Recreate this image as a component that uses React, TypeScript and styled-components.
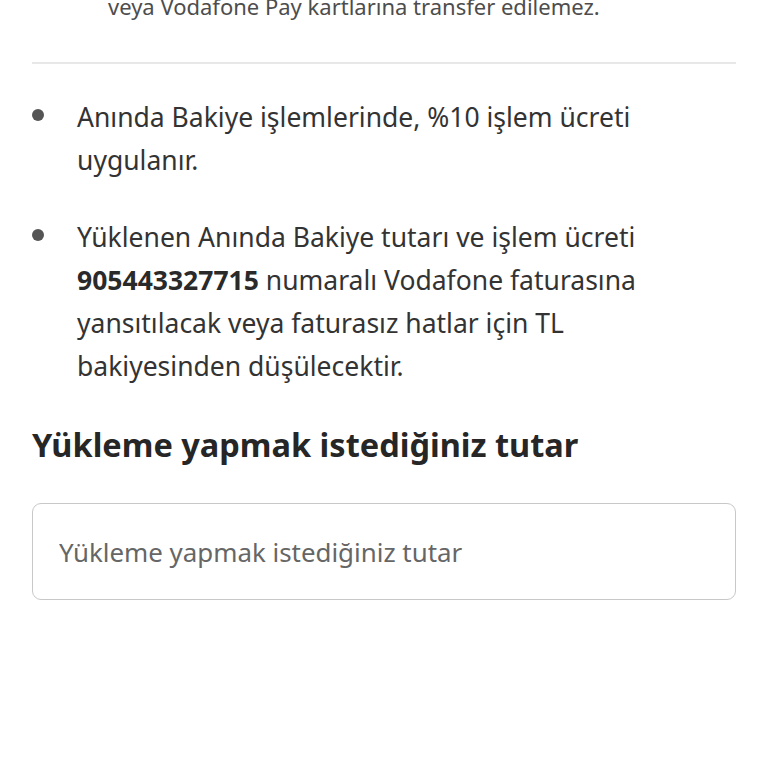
import React from 'react';
import styled, { createGlobalStyle } from 'styled-components';

const GlobalStyle = createGlobalStyle`
  html, body {
    margin: 0;
    padding: 0;
    background: #ffffff;
  }
  body {
    font-family: "Noto Sans", "Open Sans", sans-serif;
    color: #333333;
    overflow: hidden;
  }
`;

const Page = styled.div`
  width: 768px;
  height: 768px;
  padding: 0 32px;
  box-sizing: border-box;
  overflow: hidden;
  background: #ffffff;
`;

const CutNote = styled.p`
  margin: -10px 0 0 76px;
  font-size: 22px;
  line-height: 32px;
  color: #4d4d4d;
`;

const Divider = styled.hr`
  margin: 40px 0 0;
  border: none;
  height: 2px;
  background: #e8e8e8;
`;

const BulletList = styled.ul`
  list-style: none;
  margin: 0;
  padding: 32px 0 0;
  display: flex;
  flex-direction: column;
  gap: 34px;
`;

const BulletItem = styled.li`
  position: relative;
  padding: 0 40px 0 45px;
  font-size: 26.5px;
  line-height: 43px;
  color: #333333;

  &::before {
    content: '';
    position: absolute;
    left: 0;
    top: 13px;
    width: 12px;
    height: 12px;
    border-radius: 50%;
    background: #555555;
  }
`;

const Strong = styled.b`
  font-weight: 700;
  color: #2a2a2a;
`;

const SectionTitle = styled.h2`
  margin: 37px 0 0;
  font-size: 32.5px;
  line-height: 40px;
  font-weight: 700;
  color: #262626;
`;

const AmountInput = styled.input`
  display: block;
  margin-top: 38px;
  width: 100%;
  height: 97px;
  box-sizing: border-box;
  padding: 0 26px;
  border: 1.5px solid #c8c8c8;
  border-radius: 9px;
  background: #ffffff;
  font-family: "Noto Sans", "Open Sans", sans-serif;
  font-size: 25.9px;
  color: #333333;
  outline: none;

  &::placeholder {
    color: #666666;
  }
`;

export default function App() {
  return (
    <>
      <GlobalStyle />
      <Page>
        <CutNote>veya Vodafone Pay kartlarına transfer edilemez.</CutNote>
        <Divider />
        <BulletList>
          <BulletItem>
            Anında Bakiye işlemlerinde, %10 işlem ücreti uygulanır.
          </BulletItem>
          <BulletItem>
            Yüklenen Anında Bakiye tutarı ve işlem ücreti{' '}
            <Strong>905443327715</Strong> numaralı Vodafone faturasına
            yansıtılacak veya faturasız hatlar için TL bakiyesinden
            düşülecektir.
          </BulletItem>
        </BulletList>
        <SectionTitle>Yükleme yapmak istediğiniz tutar</SectionTitle>
        <AmountInput placeholder="Yükleme yapmak istediğiniz tutar" />
      </Page>
    </>
  );
}
